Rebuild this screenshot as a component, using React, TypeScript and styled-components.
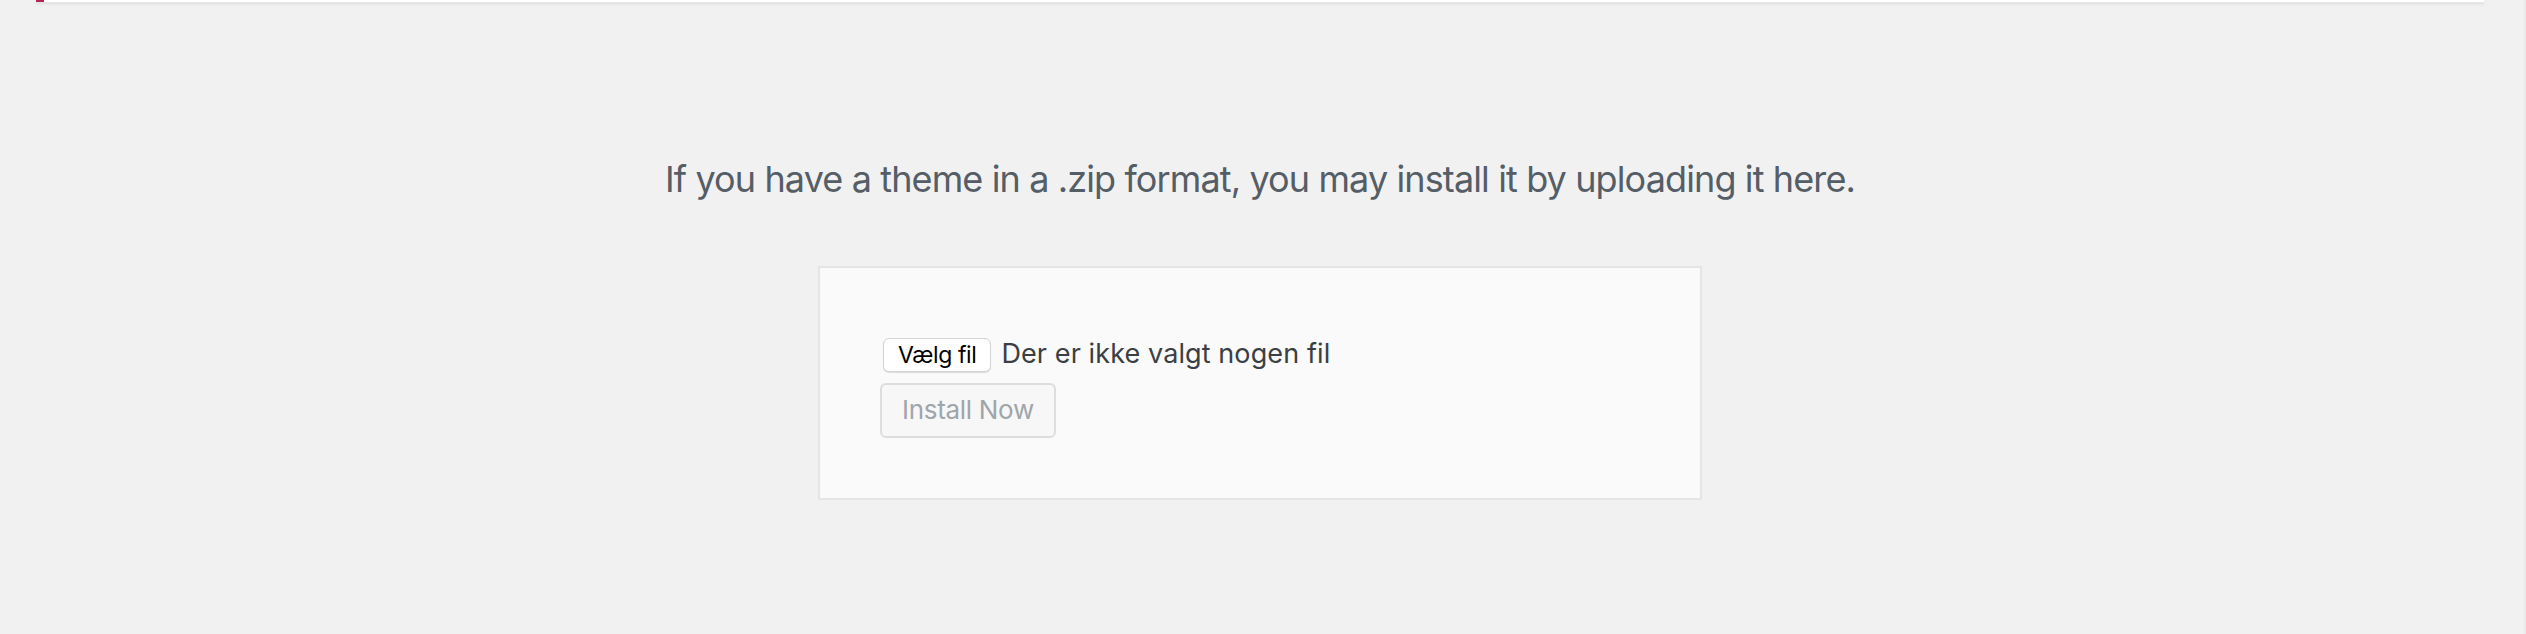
import React from "react";
import styled, { createGlobalStyle } from "styled-components";

const Global = createGlobalStyle`
  html, body { margin: 0; padding: 0; background: #f1f1f1; }
  body { font-family: Inter, "Open Sans", "Liberation Sans", sans-serif; }
  #root { min-height: 634px; }
`;

const Shell = styled.div`
  display: flex;
  width: 2526px;
  height: 634px;
  overflow: hidden;
  background: #f1f1f1;
`;

const Main = styled.main`
  flex: 1;
  padding: 0 40px 0 36px;
  display: flex;
  flex-direction: column;
`;

const ScrollTrack = styled.div`
  width: 2px;
  background: #e9e9e9;
`;

const Notice = styled.div`
  height: 2px;
  background: #ffffff;
  border-left: 8px solid #b62553;
  box-shadow: 0 2px 3px rgba(0, 0, 0, 0.1);
`;

const Help = styled.p`
  margin: 154px 0 0;
  font-size: 36px;
  line-height: 46px;
  color: #555d66;
  text-align: center;
  letter-spacing: -0.88px;
`;

const Form = styled.form`
  box-sizing: border-box;
  width: 884px;
  margin: 64px auto 0;
  padding: 60px;
  background: #fafafa;
  border: 2px solid #e5e5e5;
  display: flex;
  flex-direction: column;
  align-items: flex-start;
`;

const FileRow = styled.div`
  height: 54px;
  display: flex;
  align-items: center;
  gap: 10px;
  margin-bottom: 1px;
`;

const ChooseButton = styled.button`
  box-sizing: border-box;
  margin-left: 3px;
  height: 34px;
  padding: 0 14px 0 14px;
  background: #ffffff;
  border: 1px solid #d4d4d4;
  border-radius: 6px;
  box-shadow: 0 1px 1px rgba(0, 0, 0, 0.12);
  font-family: Inter, "Liberation Sans", sans-serif;
  font-size: 23px;
  letter-spacing: -0.4px;
  color: #000;
  cursor: pointer;
`;

const FileName = styled.span`
  font-size: 27px;
  letter-spacing: 0.1px;
  color: #3a3f44;
  margin-top: -4px;
`;

const InstallButton = styled.button`
  box-sizing: border-box;
  height: 55px;
  padding: 0 20px 2px;
  background: #f7f7f7;
  border: 2px solid #dddddd;
  border-radius: 6px;
  font-family: Inter, "Liberation Sans", sans-serif;
  font-size: 26px;
  letter-spacing: -0.3px;
  color: #a0a5aa;
  cursor: default;
`;

export default function App() {
  return (
    <>
      <Global />
      <Shell>
        <Main>
          <Notice />
          <Help>
            If you have a theme in a .zip format, you may install it by uploading it here.
          </Help>
          <Form onSubmit={(e) => e.preventDefault()}>
            <FileRow>
              <ChooseButton type="button">Vælg fil</ChooseButton>
              <FileName>Der er ikke valgt nogen fil</FileName>
            </FileRow>
            <InstallButton type="submit" disabled>
              Install Now
            </InstallButton>
          </Form>
        </Main>
        <ScrollTrack />
      </Shell>
    </>
  );
}
